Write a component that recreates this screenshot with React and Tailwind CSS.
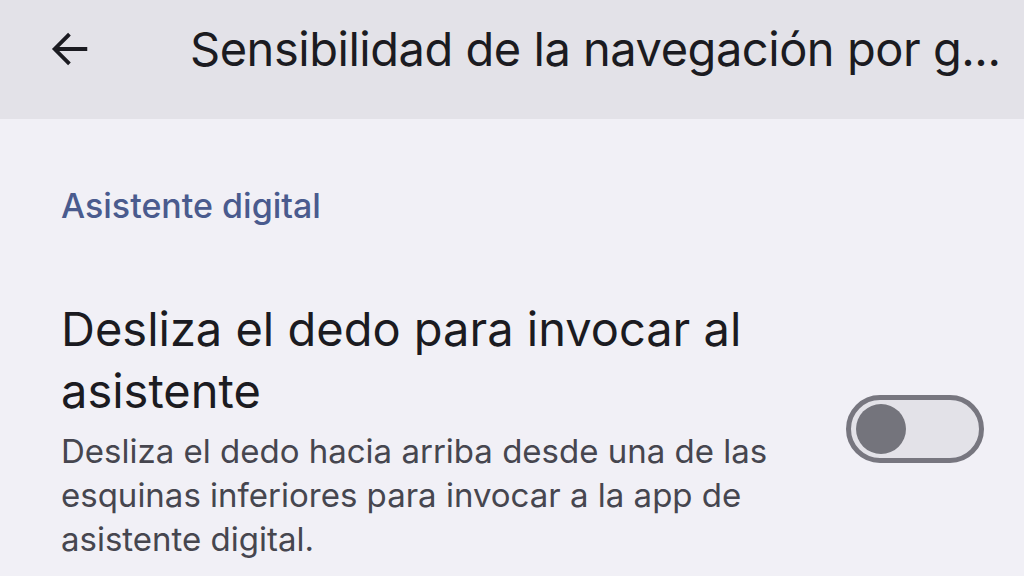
import React from "react";

export default function App() {
  return (
    <div className="w-[1024px] h-[576px] overflow-hidden bg-[#f1f0f6] text-[#1b1b21]" style={{ fontFamily: "Inter, Roboto, 'Noto Sans', sans-serif" }}>
      <header className="h-[119px] bg-[#e3e2e8] flex items-start pt-[25px]">
        <div className="w-[190px] flex items-center pl-[47px] h-[48px]">
          <svg width="46" height="46" viewBox="0 0 24 24" fill="none" stroke="#1b1b21" strokeWidth="2" strokeLinecap="square">
            <path d="M20 12H5" />
            <path d="M11 5l-7 7 7 7" />
          </svg>
        </div>
        <h1 className="text-[47px] leading-[48px] tracking-[-0.01em] whitespace-nowrap">Sensibilidad de la navegación por g...</h1>
      </header>
      <main className="px-[61px]">
        <h2 className="pt-[67px] text-[34px] leading-[40px] text-[#4a5b8e] font-medium">Asistente digital</h2>
        <div className="mt-[72px] flex items-start">
          <div className="flex-1">
            <div className="text-[47px] leading-[62px] text-[#1b1b21]">
              Desliza el dedo para invocar al<br />asistente
            </div>
            <p className="text-[33px] leading-[44px] text-[#46464f] mt-[7px] w-[740px]">
              Desliza el dedo hacia arriba desde una de las esquinas inferiores para invocar a la app de asistente digital.
            </p>
          </div>
          <div className="mt-[97px] -mr-[21px] w-[138px] h-[68px] rounded-full border-[5px] border-[#77767f] bg-[#e3e2e8] flex items-center pl-[5px]">
            <div className="w-[50px] h-[50px] rounded-full bg-[#74747c]" />
          </div>
        </div>
      </main>
    </div>
  );
}
